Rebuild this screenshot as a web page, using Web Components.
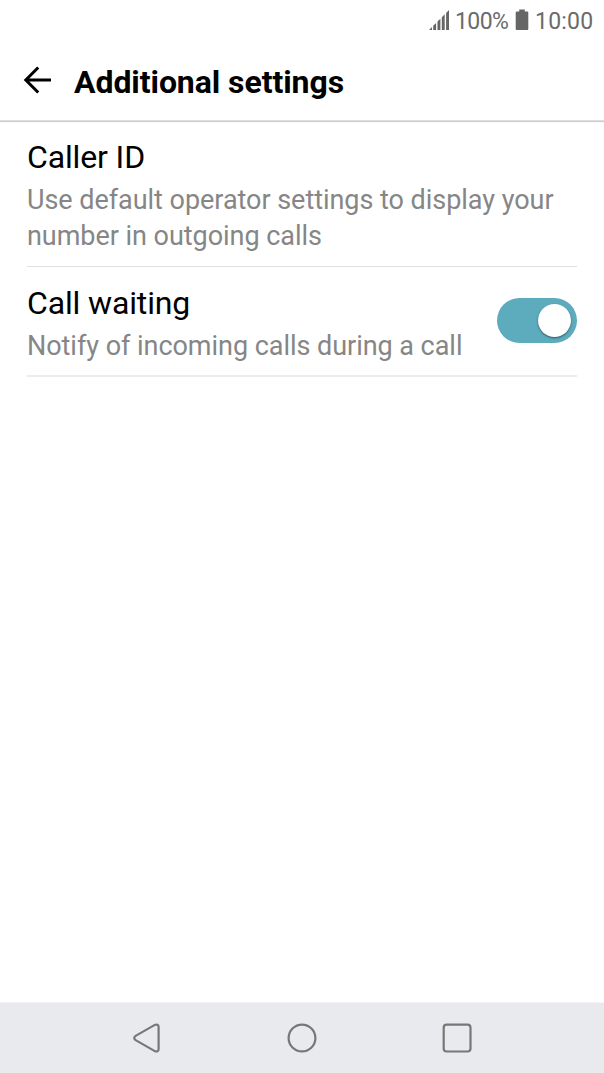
<!DOCTYPE html>
<html lang="en">
<head>
<meta charset="utf-8">
<title>Additional settings</title>
<style>
html, body { margin: 0; height: 100%; background: #fff; overflow: hidden; }
body { font-family: Roboto, "Liberation Sans", sans-serif; }
</style>
</head>
<body>
<settings-screen></settings-screen>
<script>
const define = (name, html) => customElements.define(name, class extends HTMLElement {
  constructor() {
    super();
    this.attachShadow({ mode: 'open' }).innerHTML = html;
  }
});

define('status-bar', `
<style>
:host { display: flex; align-items: flex-start; justify-content: flex-end; height: 42px; box-sizing: border-box; padding: 0 10px 0 0; color: #6b6b6b; font-size: 23px; line-height: 44px; }
svg { display: block; fill: #666; margin-top: 9px; }
.level { margin: 0 7px 0 6px; width: 53px; letter-spacing: -.6px; white-space: nowrap; }
.time { margin-left: 6px; width: 59px; letter-spacing: .2px; white-space: nowrap; }
</style>
<svg width="20" height="22" viewBox="0 0 20 22"><path d="M0 21 3 18V21ZM4.2 21V16.8L7.1 14V21ZM8.5 21V12.5L11.4 9.7V21ZM12.8 21V8.2L15.7 5.3V21ZM17.1 21V3.9L20 1V21Z"/></svg>
<span class="level">100%</span>
<svg width="14" height="22" viewBox="0 0 14 22"><path d="M4.2.5H9.8V2.5H12.3Q13.3 2.5 13.3 3.5V20Q13.3 21 12.3 21H1.7Q.7 21 .7 20V3.5Q.7 2.5 1.7 2.5H4.2Z"/></svg>
<span class="time">10:00</span>`);

define('app-header', `
<style>
:host { display: flex; align-items: center; height: 79px; box-sizing: border-box; padding-left: 23px; border-bottom: 1px solid #ddd; box-shadow: 0 1px 1px #d0d0d0; }
svg { display: block; margin-top: -3px; fill: none; stroke: #000; stroke-width: 3; }
h1 { margin: 2px 0 0 22px; font-size: 32px; line-height: 40px; font-weight: 700; letter-spacing: -.07px; white-space: nowrap; }
</style>
<svg width="29" height="28" viewBox="0 0 29 28"><path d="M15.2 1.5 2.8 14 15.2 26.5M2.8 14H28"/></svg>
<h1><slot></slot></h1>`);

define('toggle-switch', `
<style>
:host { display: flex; flex: none; align-items: center; justify-content: flex-end; width: 80px; height: 45px; box-sizing: border-box; margin-bottom: 6px; padding-right: 6px; border-radius: 23px; background: #5cacbe; }
i { width: 33px; height: 33px; border-radius: 50%; background: #fff; box-shadow: 0 1px 2px rgba(0,0,0,.5); }
</style><i></i>`);

define('setting-row', `
<style>
:host { display: flex; align-items: center; margin: 0 27px; box-sizing: border-box; }
.text { flex: 1; min-width: 0; }
.label { font-size: 32px; line-height: 40px; color: #000; letter-spacing: -.14px; white-space: nowrap; }
.detail { margin-top: 5px; font-size: 27px; line-height: 36px; color: #868686; letter-spacing: -.04px; white-space: nowrap; }
</style>
<div class="text"><div class="label"><slot name="label"></slot></div><div class="detail"><slot></slot></div></div>
<slot name="control"></slot>`);

define('navigation-bar', `
<style>
:host { display: flex; justify-content: center; align-items: center; gap: 125px; height: 71px; box-sizing: border-box; border-top: 1px solid #f3f4f5; background: #e9eaed; }
svg { display: block; margin-top: -1px; fill: none; stroke: #777; stroke-width: 2.2; stroke-linejoin: round; }
</style>
<svg width="30" height="30" viewBox="0 0 30 30"><path d="M3.6 12.9 22.4 2.1Q26.6 .4 26.6 4V26Q26.6 29.6 22.4 27.9L3.6 17.1Q.8 15 3.6 12.9Z"/></svg>
<svg width="30" height="30" viewBox="0 0 30 30"><circle cx="15" cy="15" r="13.4"/></svg>
<svg width="30" height="30" viewBox="0 0 30 30"><rect x="1.7" y="1.7" width="26.8" height="26.8" rx="3"/></svg>`);

define('settings-screen', `
<style>
:host { display: flex; flex-direction: column; height: 1073px; width: 604px; background: #fff; }
main { flex: 1; }
.caller { height: 146px; padding: 16px 0 12px; border-bottom: 1px solid #e0e0e0; }
.waiting { height: 110px; padding: 16px 0 11px; border-bottom: 2px solid #ececec; }
</style>
<status-bar></status-bar>
<app-header>Additional settings</app-header>
<main>
<setting-row class="caller"><span slot="label">Caller ID</span>Use default operator settings to display your<br>number in outgoing calls</setting-row>
<setting-row class="waiting"><span slot="label">Call waiting</span>Notify of incoming calls during a call<toggle-switch slot="control"></toggle-switch></setting-row>
</main>
<navigation-bar></navigation-bar>`);
</script>
</body>
</html>
